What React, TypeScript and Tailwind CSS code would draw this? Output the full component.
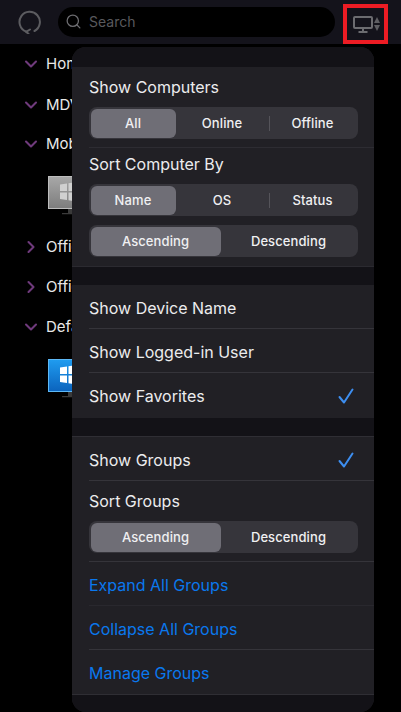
import { ChevronDown, ChevronRight, Search } from 'lucide-react'

const SANS = "font-['Inter','Liberation_Sans',sans-serif]"

function Band({ className }: { className: string }) {
  return <div className={`bg-[#131217] ${className}`} />
}

function Segmented({ options, active = 0 }: { options: string[]; active?: number }) {
  const widths = options.length === 3 ? ['w-[85px]', 'w-[93px]', 'flex-1'] : ['w-[130px]', 'flex-1']
  return (
    <div className="mx-[17px] flex h-8 w-[269px] items-stretch rounded-lg bg-[#36353b] p-[1.5px]">
      {options.map((label, i) => (
        <div
          key={label}
          className={`relative flex items-center justify-center rounded-md pt-px text-[13px] font-medium tracking-[0.1px] text-[#f0f0f2] ${widths[i]} ${
            i === active ? 'bg-[#6f6e76]' : ''
          }`}
        >
          {label}
          {options.length === 3 && i === 2 && (
            <span className="absolute left-0 top-[7px] h-[15px] w-px bg-[#55545a]" />
          )}
        </div>
      ))}
    </div>
  )
}

function BlueCheck() {
  return (
    <svg width="16" height="16" viewBox="0 0 16 16" fill="none" stroke="#3d8ef0" strokeWidth="2" strokeLinecap="round" strokeLinejoin="round">
      <path d="M1.500 9l4.500 5.500L14.500 1.500" />
    </svg>
  )
}

function Row({
  label,
  checked,
  link,
  divider = 'border-[#35343a]',
}: {
  label: string
  checked?: boolean
  link?: boolean
  divider?: string
}) {
  return (
    <div className={`ml-[17px] flex h-11 items-center justify-between border-b pr-[20px] pt-[2px] ${divider}`}>
      <span className={`text-[16px] ${link ? 'text-[#0a78ee]' : 'text-[#ececee]'}`}>{label}</span>
      {checked && <BlueCheck />}
    </div>
  )
}

function TreeRow({ label, open, className }: { label: string; open?: boolean; className: string }) {
  const Icon = open ? ChevronDown : ChevronRight
  return (
    <div className={`flex items-center gap-[5px] pl-[21px] ${className}`}>
      <Icon className="h-5 w-5 text-[#6f3a7c]" strokeWidth={2.5} />
      <span className="text-[15px] text-[#e8e8e8]">{label}</span>
    </div>
  )
}

function WindowsPc({ blue }: { blue?: boolean }) {
  return (
    <svg width="32" height="40" viewBox="0 0 32 40" className="ml-[48px]">
      <defs>
        <linearGradient id={blue ? 'pcBlue' : 'pcGrey'} x1="0" y1="0" x2="0" y2="1">
          <stop offset="0" stopColor={blue ? '#1f9cf0' : '#a8a8a8'} />
          <stop offset="1" stopColor={blue ? '#0b63bd' : '#7d7d7d'} />
        </linearGradient>
      </defs>
      <rect x="0.5" y="0.5" width="31" height="32" fill={`url(#${blue ? 'pcBlue' : 'pcGrey'})`} stroke={blue ? '#5db8f5' : '#bdbdbd'} />
      <path d="M12 8.500l7-1v7.500h-7zM20.500 7.300l8-1.300v9h-8zM12 16.500h7V24l-7-1zM20.500 16.500h8v9l-8-1.300z" fill={blue ? '#ffffff' : '#d0d0d0'} />
      <path d="M20 33v4h-6v1.200h12V33z" fill="#3a3a3a" />
    </svg>
  )
}

export default function App() {
  return (
    <div className={`relative h-[712px] w-[401px] overflow-hidden bg-black ${SANS}`}>
      <header className="flex h-11 items-end bg-[#14131b] pl-[18px]">
        <div className="flex h-[43px] items-center self-start">
          <svg width="24" height="24" viewBox="0 0 24 24" fill="none" stroke="#5c5c60" strokeWidth="2" className="shrink-0">
            <path d="M8 21.500A10.200 10.200 0 1 1 16.500 21" strokeLinecap="round" />
            <path d="M12 19.500l-4 2.300 2.500 2" strokeLinecap="round" strokeLinejoin="round" />
          </svg>
          <div className="ml-[16px] flex h-[30px] w-[277px] items-center rounded-full bg-black pl-[7px]">
            <Search className="h-[17px] w-[17px] text-[#6e6e72]" strokeWidth={1.8} />
            <span className="ml-[7px] text-[14px] text-[#59595d]">Search</span>
          </div>
        </div>
        {/* red annotation box round the view button */}
        <div className="ml-[8px] flex h-10 w-[45px] items-center gap-[1px] border-4 border-[#ed1c24] pl-[6px]">
          <svg width="20" height="17" viewBox="0 0 20 17" fill="none" stroke="#6c6c70" strokeWidth="2" className="shrink-0">
            <rect x="1" y="1" width="18" height="11" rx="1" />
            <path d="M10 12v4M5.500 16h9" />
          </svg>
          <div className="flex flex-col gap-[2px]">
            <span className="block h-0 w-0 border-x-[3px] border-b-[6px] border-x-transparent border-b-[#5e5e62]" />
            <span className="block h-0 w-0 border-x-[3px] border-t-[6px] border-x-transparent border-t-[#5e5e62]" />
          </div>
        </div>
      </header>

      <div className="pt-[9px]">
        <TreeRow open label="Home" className="h-[22px]" />
        <TreeRow open label="MDV" className="mt-[19px] h-[22px]" />
        <TreeRow open label="Mobile" className="mt-[17px] h-[22px]" />
        <div className="mt-[21px] h-10"><WindowsPc /></div>
        <TreeRow label="Office" className="mt-[20px] h-[22px]" />
        <TreeRow label="Office" className="mt-[18px] h-[22px]" />
        <TreeRow open label="Default" className="mt-[18px] h-[22px]" />
        <div className="mt-[21px] h-10"><WindowsPc blue /></div>
      </div>

      {/* settings popover */}
      <div className="absolute left-[72px] top-[47px] h-[665px] w-[302px] overflow-hidden rounded-[14px] bg-[#212025] text-[#ececee]">
        <Band className="h-5" />
        <div className="flex h-[40px] items-center pl-[17px] text-[16px]">Show Computers</div>
        <Segmented options={['All', 'Online', 'Offline']} />
        <div className="ml-[17px] mt-2 h-px bg-[#2d2c32]" />
        <div className="flex h-[36px] items-center pb-[4px] pl-[17px] text-[16px]">Sort Computer By</div>
        <Segmented options={['Name', 'OS', 'Status']} />
        <div className="mt-[9px]">
          <Segmented options={['Ascending', 'Descending']} />
        </div>
        <Band className="mt-[9px] h-[19px] border-t border-[#2b2a30]" />
        <Row label="Show Device Name" />
        <Row label="Show Logged-in User" />
        <Row label="Show Favorites" checked divider="border-transparent" />
        <div className="h-[1px]" />
        <Band className="h-[19px] border-b border-[#2f2e34]" />
        <Row label="Show Groups" checked />
        <div className="flex h-[40px] items-center pl-[17px] text-[16px]">Sort Groups</div>
        <Segmented options={['Ascending', 'Descending']} />
        <div className="ml-[17px] mt-2 h-px bg-[#35343a]" />
        <Row label="Expand All Groups" link divider="border-[#29282e]" />
        <Row label="Collapse All Groups" link />
        <Row label="Manage Groups" link divider="border-transparent" />
        <Band className="h-8 border-t border-[#2f2e34]" />
      </div>
    </div>
  )
}
